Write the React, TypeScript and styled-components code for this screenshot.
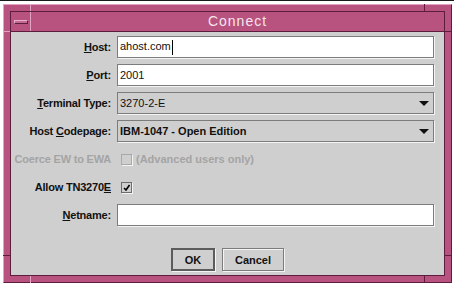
import React from "react";
import styled, { createGlobalStyle } from "styled-components";

const GlobalStyle = createGlobalStyle`
  html, body {
    margin: 0;
    padding: 0;
    background: #ffffff;
  }
  body {
    font-family: "Liberation Sans", Arial, sans-serif;
  }
`;

const Page = styled.div`
  width: 454px;
  height: 284px;
  box-sizing: border-box;
  padding: 3px 0 0 3px;
  border-top: 1px solid #1a1a1a;
  overflow: hidden;
`;

// outer pink window frame with bevelled edges
const Frame = styled.div`
  position: relative;
  box-sizing: border-box;
  width: 449px;
  height: 279px;
  padding: 6px;
  background: #b8527e;
  border: 1px solid;
  border-color: #e2a4c2 #5e1c3e #5e1c3e #e2a4c2;
`;

// resize handle marks drawn on the frame
const Tick = styled.span<{ $dark?: boolean }>`
  position: absolute;
  background: ${(p) => (p.$dark ? "#5e1c3e" : "#e2a4c2")};
`;

const Inner = styled.div`
  display: flex;
  flex-direction: column;
  height: 100%;
  box-sizing: border-box;
  border: 1px solid #5e1c3e;
`;

const TitleBar = styled.div`
  display: flex;
  height: 19px;
  background: #b8527e;
  border-bottom: 1px solid #5e1c3e;
`;

const MinBox = styled.div`
  display: flex;
  align-items: center;
  justify-content: center;
  width: 19px;
  border-right: 1px solid #e2a4c2;
`;

const MinBar = styled.span`
  width: 12px;
  height: 2px;
  background: #c46a92;
  border: 1px solid;
  border-color: #e8b0cc #5e1c3e #5e1c3e #e8b0cc;
`;

const Title = styled.div`
  flex: 1;
  text-align: center;
  color: #f4e6ee;
  font-size: 14px;
  letter-spacing: 1px;
  line-height: 19px;
`;

const Content = styled.div`
  flex: 1;
  display: flex;
  flex-direction: column;
  background: #cfcfcf;
  padding: 4px 10px 0 0;
`;

const Form = styled.div`
  display: grid;
  grid-template-columns: 100px 1fr;
  grid-auto-rows: 22px;
  column-gap: 6px;
  row-gap: 6px;
`;

const Label = styled.div<{ $disabled?: boolean }>`
  text-align: right;
  line-height: 22px;
  font-size: 11px;
  font-weight: bold;
  color: ${(p) => (p.$disabled ? "#a4a4a4" : "#111")};
  white-space: nowrap;
  letter-spacing: -0.2px;
`;

const Key = styled.span`
  text-decoration: underline;
`;

const Field = styled.div<{ $combo?: boolean }>`
  display: flex;
  align-items: center;
  box-sizing: border-box;
  padding: 0 4px 0 2px;
  background: ${(p) => (p.$combo ? "#cfcfcf" : "#ffffff")};
  border: 1px solid #7c7c7c;
  box-shadow: 1px 1px 0 #f4f4f4;
  font-size: 11px;
  color: #111;
`;

const Value = styled.span<{ $bold?: boolean }>`
  flex: 1;
  white-space: nowrap;
  font-weight: ${(p) => (p.$bold ? "bold" : "normal")};
`;

const Caret = styled.span`
  display: inline-block;
  width: 1px;
  height: 15px;
  margin-left: 1px;
  background: #000;
  vertical-align: middle;
`;

const Arrow = styled.span`
  width: 0;
  height: 0;
  border-left: 5px solid transparent;
  border-right: 5px solid transparent;
  border-top: 5px solid #111;
`;

const CheckCell = styled.div<{ $disabled?: boolean }>`
  display: flex;
  align-items: center;
  gap: 4px;
  padding-left: 4px;
  font-size: 11px;
  font-weight: bold;
  color: ${(p) => (p.$disabled ? "#a4a4a4" : "#111")};
`;

const Box = styled.span<{ $disabled?: boolean }>`
  display: flex;
  align-items: center;
  justify-content: center;
  box-sizing: border-box;
  width: 11px;
  height: 11px;
  border: 1px solid ${(p) => (p.$disabled ? "#a8a8a8" : "#6c6c6c")};
  box-shadow: 1px 1px 0 #f4f4f4;
`;

const Buttons = styled.div`
  display: flex;
  justify-content: center;
  gap: 7px;
  margin-top: 22px;
  padding-left: 10px;
`;

const Button = styled.button<{ $default?: boolean }>`
  box-sizing: border-box;
  height: 23px;
  padding: 0;
  width: ${(p) => (p.$default ? "44px" : "62px")};
  background: #cfcfcf;
  border: ${(p) => (p.$default ? "2px solid #5c5c5c" : "1px solid #7c7c7c")};
  box-shadow: ${(p) =>
    p.$default ? "1px 1px 0 #f4f4f4" : "inset 1px 1px 0 #f4f4f4, 1px 1px 0 #f4f4f4"};
  font-family: "Liberation Sans", Arial, sans-serif;
  font-size: 11px;
  font-weight: bold;
  color: #111;
`;

export default function App() {
  return (
    <>
      <GlobalStyle />
      <Page>
        <Frame>
          <Tick style={{ left: 26, top: -1, width: 1, height: 7 }} />
          <Tick style={{ left: -1, top: 26, width: 7, height: 1 }} />
          <Tick style={{ left: 26, bottom: -1, width: 1, height: 7 }} />
          <Tick $dark style={{ left: -1, bottom: 26, width: 7, height: 1 }} />
          <Tick $dark style={{ right: 26, top: -1, width: 1, height: 7 }} />
          <Tick $dark style={{ right: -1, top: 26, width: 7, height: 1 }} />
          <Tick $dark style={{ right: 26, bottom: -1, width: 1, height: 7 }} />
          <Tick $dark style={{ right: -1, bottom: 26, width: 7, height: 1 }} />
          <Inner>
            <TitleBar>
              <MinBox>
                <MinBar />
              </MinBox>
              <Title>Connect</Title>
            </TitleBar>
            <Content>
              <Form>
                <Label>
                  <Key>H</Key>ost:
                </Label>
                <Field>
                  <Value>
                    ahost.com
                    <Caret />
                  </Value>
                </Field>

                <Label>
                  <Key>P</Key>ort:
                </Label>
                <Field>
                  <Value>2001</Value>
                </Field>

                <Label>
                  <Key>T</Key>erminal Type:
                </Label>
                <Field $combo>
                  <Value>3270-2-E</Value>
                  <Arrow />
                </Field>

                <Label>
                  Host <Key>C</Key>odepage:
                </Label>
                <Field $combo>
                  <Value $bold>IBM-1047 - Open Edition</Value>
                  <Arrow />
                </Field>

                <Label $disabled>Coerce EW to EWA</Label>
                <CheckCell $disabled>
                  <Box $disabled />
                  (Advanced users only)
                </CheckCell>

                <Label>
                  Allow TN3270<Key>E</Key>
                </Label>
                <CheckCell>
                  <Box>
                    <svg width="7" height="7" viewBox="0 0 7 7">
                      <path d="M1 4 L3 6 L6.5 1" stroke="#000" strokeWidth="1.6" fill="none" />
                    </svg>
                  </Box>
                </CheckCell>

                <Label>
                  <Key>N</Key>etname:
                </Label>
                <Field>
                  <Value />
                </Field>
              </Form>
              <Buttons>
                <Button $default>OK</Button>
                <Button>Cancel</Button>
              </Buttons>
            </Content>
          </Inner>
        </Frame>
      </Page>
    </>
  );
}
